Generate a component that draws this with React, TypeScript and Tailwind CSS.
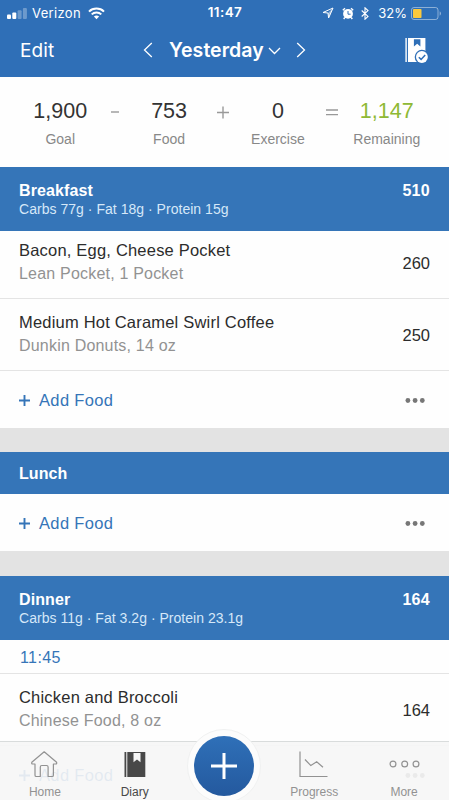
import React from "react";

interface FoodEntry {
  name: string;
  detail: string;
  calories: number;
}

interface MealHeaderProps {
  title: string;
  macros?: string;
  calories?: number;
}

const breakfast: FoodEntry[] = [
  { name: "Bacon, Egg, Cheese Pocket", detail: "Lean Pocket, 1 Pocket", calories: 260 },
  { name: "Medium Hot Caramel Swirl Coffee", detail: "Dunkin Donuts, 14 oz", calories: 250 },
];

const StatusBar: React.FC = () => (
  <div className="grid h-[26px] grid-cols-3 items-center pl-[7px] pr-[7px] font-['Inter',sans-serif] text-[13px] leading-none">
    <div className="flex items-center">
      <svg width="20" height="11" viewBox="0 0 20 11" fill="currentColor">
        <rect x="0" y="6.5" width="4" height="4.5" rx="1" />
        <rect x="5.3" y="4.5" width="4" height="6.5" rx="1" />
        <rect x="10.6" y="2.2" width="4" height="8.8" rx="1" opacity="0.3" />
        <rect x="15.9" y="0" width="4" height="11" rx="1" opacity="0.3" />
      </svg>
      <span className="ml-[5px] tracking-[0.35px]">Verizon</span>
      <svg className="ml-[7px]" width="17" height="13" viewBox="0 0 17 13" fill="none" stroke="currentColor" strokeWidth="2">
        <path d="M1 4.6C5 0.6 12 0.6 16 4.6" />
        <path d="M3.7 7.4C6.3 4.9 10.7 4.9 13.3 7.4" />
        <path d="M8.5 12.2L5.9 9.5C7.3 8.2 9.7 8.2 11.1 9.5Z" fill="currentColor" stroke="none" />
      </svg>
    </div>
    <div className="pl-px text-center text-[13.5px] font-semibold tracking-[0.4px]">11:47</div>
    <div className="flex items-center justify-end">
      <svg className="mr-2" width="12" height="12" viewBox="0 0 12 12" fill="none" stroke="currentColor" strokeWidth="1" strokeLinejoin="round">
        <path d="M11 1L1 5.5L6 6L6.6 11Z" />
        <path d="M11 1L6 6L6.6 11Z" fill="currentColor" fillOpacity="0.5" stroke="none" />
      </svg>
      <svg className="mr-[7px]" width="12" height="13" viewBox="0 0 12 13" fill="none">
        <circle cx="6" cy="6.8" r="4.9" fill="currentColor" />
        <path d="M0.8 3.2L3 1.2M11.2 3.2L9 1.2M2.8 10.5L1.7 12M9.2 10.5L10.3 12" stroke="currentColor" strokeWidth="1.4" />
        <path d="M6 4V7.2H8.6" stroke="#2f6fb7" strokeWidth="1" />
      </svg>
      <svg className="mr-[9px]" width="8" height="13" viewBox="0 0 8 13" fill="none" stroke="currentColor" strokeWidth="1.1">
        <path d="M0.7 3.5L7 9.4L4 12.2V0.8L7 3.6L0.7 9.5" />
      </svg>
      <span className="mr-1">32%</span>
      <svg width="31" height="13" viewBox="0 0 31 13">
        <rect x="0.5" y="0.5" width="26.5" height="12" rx="2.5" fill="none" stroke="currentColor" opacity="0.45" />
        <rect x="2" y="2" width="8.5" height="9" rx="0.8" fill="#fbc93d" />
        <path d="M28.7 4.3C30.4 5.2 30.4 7.8 28.7 8.7Z" fill="currentColor" opacity="0.5" />
      </svg>
    </div>
  </div>
);

const NavBar: React.FC = () => (
  <div className="flex h-12 items-center pl-5 pr-5 font-['Inter',sans-serif]">
    <button type="button" className="mt-[3px] w-[123px] text-left text-[19px] tracking-[0.1px]">
      Edit
    </button>
    <svg width="10" height="16" viewBox="0 0 10 16" fill="none" stroke="currentColor" strokeWidth="1.3">
      <path d="M8.8 1L1.5 8L8.8 15" />
    </svg>
    <span className="ml-4 mt-[1px] w-[95px] whitespace-nowrap text-[19.5px] font-semibold tracking-[0.05px]">
      Yesterday
    </span>
    <svg className="ml-[4px] mt-[2px]" width="13" height="8" viewBox="0 0 13 8" fill="none" stroke="currentColor" strokeWidth="1.3">
      <path d="M1 1L6.5 6.5L12 1" />
    </svg>
    <svg className="ml-[15px]" width="10" height="16" viewBox="0 0 10 16" fill="none" stroke="currentColor" strokeWidth="1.3">
      <path d="M1.2 1L8.5 8L1.2 15" />
    </svg>
    <svg className="ml-auto" width="24" height="26" viewBox="0 0 24 26">
      <rect x="0.4" y="1" width="1.4" height="24" fill="currentColor" />
      <rect x="3" y="1" width="17.4" height="24" fill="currentColor" />
      <path d="M8.9 2.3H15.4V9.5L12.2 6.8L8.9 9.5Z" fill="#2f6fb7" />
      <circle cx="16.9" cy="20" r="7.2" fill="#2f6fb7" />
      <circle cx="16.9" cy="20" r="5.9" fill="currentColor" />
      <path d="M13.8 20.2L16.1 22.4L20.2 17.9" fill="none" stroke="#2f6fb7" strokeWidth="1.5" />
    </svg>
  </div>
);

const SummaryItem: React.FC<{ value: string; label: string; highlight?: boolean }> = ({
  value,
  label,
  highlight,
}) => (
  <div className="flex flex-col items-center whitespace-nowrap">
    <span
      className={`text-[21.5px] leading-[28px] ${highlight ? "text-[#8fb935]" : "text-[#333]"}`}
    >
      {value}
    </span>
    <span className="text-[14px] leading-[28px] text-[#888]">{label}</span>
  </div>
);

const Operator: React.FC<{ path: string }> = ({ path }) => (
  <div className="flex justify-center pt-2">
    <svg width="14" height="14" viewBox="0 0 14 14" fill="none" stroke="#999" strokeWidth="1.4">
      <path d={path} />
    </svg>
  </div>
);

const MealHeader: React.FC<MealHeaderProps> = ({ title, macros, calories }) => (
  <div
    className={`flex justify-between bg-[#3575b8] pl-[19px] pr-[19px] text-white ${
      macros ? "h-16 pt-[14px]" : "h-[42px] pt-3"
    }`}
  >
    <div>
      <div className="text-[16px] font-bold leading-5 tracking-[0.1px]">{title}</div>
      {macros && <div className="text-[14px] leading-[17px] tracking-[0.03px] text-[#d5e8f8]">{macros}</div>}
    </div>
    {calories !== undefined && <div className="text-[16px] font-bold leading-5 tracking-[0.3px]">{calories}</div>}
  </div>
);

const FoodRow: React.FC<{ entry: FoodEntry; first?: boolean }> = ({ entry, first }) => (
  <div
    className={`flex items-end justify-between border-b border-[#e4e4e4] pl-[19px] pr-[19px] ${
      first ? "h-[68px]" : "h-[72px]"
    }`}
  >
    <div className="pb-[13px]">
      <div className="text-[16.5px] leading-[23px] tracking-[0.2px] text-[#2c2c2c]">{entry.name}</div>
      <div className="text-[16px] leading-[23px] tracking-[0.2px] text-[#929292]">{entry.detail}</div>
    </div>
    <div className="pb-[23px] text-[16.5px] leading-[23px] text-[#2c2c2c]">{entry.calories}</div>
  </div>
);

const AddFood: React.FC = () => (
  <div className="flex h-[57px] items-center justify-between pl-[19px] pr-6 pt-px">
    <button type="button" className="flex items-center gap-[9px] text-[#3575b8]">
      <svg width="11" height="11" viewBox="0 0 11 11" stroke="currentColor" strokeWidth="1.9">
        <path d="M5.5 0V11M0 5.5H11" />
      </svg>
      <span className="text-[16.5px] leading-5 tracking-[0.35px]">Add Food</span>
    </button>
    <svg width="20" height="5" viewBox="0 0 20 5" fill="#777">
      <circle cx="2.9" cy="2.5" r="2.4" />
      <circle cx="10.1" cy="2.5" r="2.4" />
      <circle cx="17.3" cy="2.5" r="2.4" />
    </svg>
  </div>
);

const Tab: React.FC<{ label: string; active?: boolean; children: React.ReactNode }> = ({
  label,
  active,
  children,
}) => (
  <div className={`flex flex-col items-center pt-[9px] ${active ? "text-[#484848]" : "text-[#929292]"}`}>
    {children}
    <span className="mt-[7px] text-[12px] leading-[14px]">{label}</span>
  </div>
);

const TabBar: React.FC = () => (
  <div className="absolute bottom-0 left-0 right-0 grid h-[59px] grid-cols-5 border-t border-[#d9dcdc] bg-[#f6f6f6]/90">
    <Tab label="Home">
      <svg width="28" height="27" viewBox="0 0 28 27" fill="none" stroke="currentColor" strokeWidth="1.2" strokeLinejoin="round">
        <path d="M13.2 0.8L0.8 11.3Q0.3 13 1.8 13H4V24.2Q4 25.5 5.3 25.5H9.3V16Q9.3 14.5 10.8 14.5H15.6Q17.1 14.5 17.1 16V25.5H21.1Q22.4 25.5 22.4 24.2V13H24.6Q26.1 13 25.6 11.3Z" />
      </svg>
    </Tab>
    <Tab label="Diary" active>
      <svg width="22" height="27" viewBox="0 0 22 27">
        <rect x="0.5" y="1" width="1.8" height="25" fill="currentColor" />
        <rect x="3.3" y="1" width="18" height="25" fill="currentColor" />
        <path d="M9.5 2H16.5V11.3L13 8.5L9.5 11.3Z" fill="#f6f6f6" />
      </svg>
    </Tab>
    <div className="relative">
      <div className="absolute left-1/2 top-[-13px] flex size-[74px] -translate-x-1/2 items-center justify-center rounded-full border border-[#f0f1f1] bg-[#fcfcfc]">
        <div className="flex size-[60px] items-center justify-center rounded-full bg-linear-to-b from-[#2f70b8] to-[#24599e]">
          <svg width="28" height="28" viewBox="0 0 28 28" stroke="#fff" strokeWidth="3">
            <path d="M14 1V27M1 14H27" />
          </svg>
        </div>
      </div>
    </div>
    <Tab label="Progress">
      <svg width="30" height="27" viewBox="0 0 30 27" fill="none" stroke="currentColor" strokeWidth="1.2">
        <path d="M1 0.5V25.5H28.5" />
        <path d="M6 8.5L11.8 14.6L17.7 10.8L24 16.3" />
      </svg>
    </Tab>
    <Tab label="More">
      <svg width="31" height="27" viewBox="0 0 31 27" fill="none" stroke="currentColor" strokeWidth="1.2">
        <circle cx="4" cy="13" r="2.9" />
        <circle cx="15.7" cy="13" r="2.9" />
        <circle cx="27" cy="13" r="2.9" />
      </svg>
    </Tab>
  </div>
);

export default function App() {
  return (
    <div className="relative h-[800px] w-[449px] overflow-hidden bg-[#fefefe] font-['Liberation_Sans',Arial,sans-serif]">
      <header className="h-[77px] bg-[#2f6fb7] text-white">
        <StatusBar />
        <NavBar />
      </header>

      {/* Daily summary */}
      <div className="grid h-[90px] grid-cols-7 pl-[33px] pr-[35px] pt-5">
        <SummaryItem value="1,900" label="Goal" />
        <Operator path="M3 7H11" />
        <SummaryItem value="753" label="Food" />
        <Operator path="M1 7.5H13M7 1.5V13.5" />
        <SummaryItem value="0" label="Exercise" />
        <Operator path="M1 5H13M1 9.6H13" />
        <SummaryItem value="1,147" label="Remaining" highlight />
      </div>

      {/* Breakfast */}
      <MealHeader title="Breakfast" macros="Carbs 77g · Fat 18g · Protein 15g" calories={510} />
      {breakfast.map((entry, index) => (
        <FoodRow key={entry.name} entry={entry} first={index === 0} />
      ))}
      <AddFood />
      <div className="h-6 bg-[#e3e3e3]" />

      {/* Lunch */}
      <MealHeader title="Lunch" />
      <AddFood />
      <div className="h-[25px] bg-[#e3e3e3]" />

      {/* Dinner */}
      <MealHeader title="Dinner" macros="Carbs 11g · Fat 3.2g · Protein 23.1g" calories={164} />
      <div className="h-[34px] border-b border-[#e4e4e4] pl-5 text-[16px] leading-[35px] tracking-[0.4px] text-[#3575b8]">
        11:45
      </div>
      <FoodRow entry={{ name: "Chicken and Broccoli", detail: "Chinese Food, 8 oz", calories: 164 }} />
      <AddFood />

      <TabBar />
    </div>
  );
}
